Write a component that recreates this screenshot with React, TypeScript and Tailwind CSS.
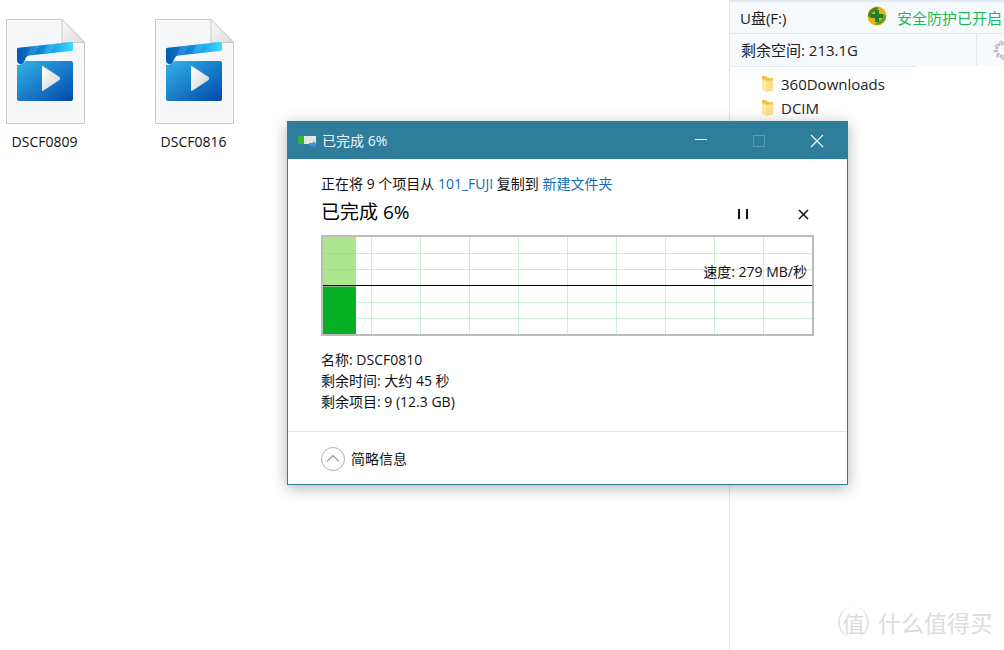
const font = { fontFamily: '"Open Sans","Noto Sans CJK SC",sans-serif' };

function VideoFile({ id }: { id: string }) {
  return (
    <svg width="80" height="107" viewBox="0 0 80 107" className="block">
      <defs>
        <linearGradient id={`${id}b`} x1="0" y1="0" x2="1" y2="1">
          <stop offset="0" stopColor="#33b4e6" />
          <stop offset="1" stopColor="#0048ad" />
        </linearGradient>
        <linearGradient id={`${id}t`} x1="0" y1="0" x2="1" y2="0">
          <stop offset="0" stopColor="#0559b0" />
          <stop offset="0.5" stopColor="#0a8fe0" />
          <stop offset="1" stopColor="#3fdcff" />
        </linearGradient>
        <linearGradient id={`${id}p`} x1="0" y1="0" x2="1" y2="1">
          <stop offset="0" stopColor="#ffffff" />
          <stop offset="1" stopColor="#d0d2d6" />
        </linearGradient>
        <linearGradient id={`${id}f`} x1="0" y1="0" x2="1" y2="1">
          <stop offset="0" stopColor="#fafafa" />
          <stop offset="1" stopColor="#dcdde0" />
        </linearGradient>
      </defs>
      <path d="M1.5 1.5H57L79.5 24V105.5H1.5Z" fill="#f6f7f9" stroke="#cacaca" />
      <path d="M57 1.5V24.5H79.5Z" fill={`url(#${id}f)`} stroke="#cacaca" />
      <path d="M12 31Q12 30 13.5 29.8L66 24Q68 23.8 68 25.5V31.5Q68 33 66 33L24 37.5Q21 38 20 42Q18.500 47 15 46Q12 45.500 12 42Z" fill={`url(#${id}t)`} />
      <path d="M27 28L35 27L30 36L22 37ZM43 26L51 25.200L46 34L38 35Z" fill="#ffffff" opacity="0.14" />
      <path d="M12 47Q18 47 20.500 43Q21.500 43 23 43H66Q68 43 68 45V81Q68 83 66 83H14Q12 83 12 81Z" fill={`url(#${id}b)`} />
      <path d="M37 49Q37 47.500 38.500 48.500L54.500 59Q56 60.500 54.500 62L38.500 72.500Q37 73.500 37 72Z" fill={`url(#${id}p)`} />
    </svg>
  );
}

function FileItem({ id, name }: { id: string; name: string }) {
  return (
    <div className="flex w-[149px] flex-col items-center">
      <VideoFile id={id} />
      <span className="mt-[7px] text-[14px] leading-[20px] text-[#111]">{name}</span>
    </div>
  );
}

function Folder() {
  return (
    <svg width="13" height="18" viewBox="0 0 13 18" className="shrink-0">
      <path d="M1 1H5L7 3H12V15H1Z" fill="#f2c14e" />
      <path d="M1 4L5 6V17L1 15Z" fill="#ffe9a6" />
      <path d="M5 5.500H12V15.500L5 17Z" fill="#fbdf8e" />
    </svg>
  );
}

function Graph() {
  const vs = [50, 99, 148, 197, 246, 295, 344, 393, 442];
  const hs = [18, 34, 67, 83];
  return (
    <svg width="493" height="101" viewBox="0 0 493 101" className="block">
      <rect x="1" y="1" width="491" height="99" fill="#fff" stroke="#bcbcbc" strokeWidth="2" />
      {vs.map((x) => (
        <rect key={x} x={x} y="2" width="1" height="97" fill="#cbeed2" />
      ))}
      {hs.map((y) => (
        <rect key={y} x="2" y={y} width="489" height="1" fill="#cbeed2" />
      ))}
      <rect x="2" y="2" width="33" height="48" fill="#aee68f" />
      <rect x="2" y="18" width="33" height="1" fill="#9ade86" />
      <rect x="2" y="34" width="33" height="1" fill="#9ade86" />
      <rect x="2" y="52" width="33" height="47" fill="#06b025" />
      <rect x="2" y="50" width="33" height="2" fill="#7fb98c" />
      <rect x="2" y="50" width="489" height="1" fill="#000" />
    </svg>
  );
}

function Dialog() {
  return (
    <div
      className="absolute left-[287px] top-[121px] h-[364px] w-[561px] border border-[#2e7d9b] bg-white shadow-[0_3px_14px_rgba(0,0,0,0.3)]"
      style={font}
    >
      <div className="flex h-[37px] items-center bg-[#2e7d9b] pl-[10px] text-white">
        <svg width="19" height="13" viewBox="0 0 19 13" className="mt-[2px]">
          <rect x="0" y="1" width="18" height="8" fill="#e4e6e6" />
          <rect x="0" y="1" width="6" height="8" fill="#35b336" />
          <path d="M11 8H15V6L19 9.500L15 13V11H11Z" fill="#3d8fe0" />
        </svg>
        <span className="ml-[5px] text-[14px] leading-[20px] text-[#eef5f8]">已完成 6%</span>
        <div className="ml-auto flex h-full items-center">
          <svg width="14" height="14" viewBox="0 0 14 14" className="mr-[44px] -translate-y-px">
            <rect x="1" y="6" width="12" height="1" fill="#fff" />
          </svg>
          <svg width="14" height="14" viewBox="0 0 14 14" className="mr-[44px]">
            <rect x="1.500" y="1.500" width="11" height="11" fill="none" stroke="#5c9ab2" />
          </svg>
          <svg width="14" height="14" viewBox="0 0 14 14" className="mr-[23px]">
            <path d="M1 1L13 13M13 1L1 13" stroke="#fff" strokeWidth="1.100" />
          </svg>
        </div>
      </div>

      <div className="px-[33px] pt-[15px]">
        <div className="text-[14px] leading-[20px] text-[#111]">
          正在将 9 个项目从 <span className="text-[#0f6cbd]">101_FUJI</span> 复制到{' '}
          <span className="text-[#0f6cbd]">新建文件夹</span>
        </div>
        <div className="mt-[3px] flex h-[30px] items-center">
          <span className="text-[19px] leading-[26px] text-black">已完成 6%</span>
          <div className="ml-auto flex items-center">
            <svg width="12" height="12" viewBox="0 0 12 12" className="mr-[49px] translate-y-[2px]">
              <rect x="1" y="1" width="2" height="10" fill="#111" />
              <rect x="9" y="1" width="2" height="10" fill="#111" />
            </svg>
            <svg width="11" height="11" viewBox="0 0 11 11" className="mr-[5px] translate-y-[2px]">
              <path d="M1 1L10 10M10 1L1 10" stroke="#111" strokeWidth="1.500" />
            </svg>
          </div>
        </div>
        <div className="relative mt-[8px] h-[101px] w-[493px]">
          <Graph />
          <span className="absolute right-[7px] top-[27px] bg-transparent text-[14px] leading-[20px] text-[#111]">
            速度: 279 MB/秒
          </span>
        </div>
        <div className="mt-[13px] text-[14px] leading-[21px] text-[#111]">
          <div>名称: DSCF0810</div>
          <div>剩余时间: 大约 45 秒</div>
          <div>剩余项目: 9 (12.3 GB)</div>
        </div>
      </div>

      <div className="mt-[19px] flex h-[55px] items-center border-t border-[#e4e4e4] px-[33px]">
        <svg width="24" height="24" viewBox="0 0 24 24">
          <circle cx="12" cy="12" r="11.500" fill="#fff" stroke="#b0b0b0" />
          <path d="M6 14.500L12 8.500L18 14.500" fill="none" stroke="#a8a8a8" strokeWidth="1.500" />
        </svg>
        <span className="ml-[6px] text-[14px] leading-[20px] text-[#111]">简略信息</span>
      </div>
    </div>
  );
}

export default function App() {
  return (
    <div className="relative flex h-[650px] w-[1004px] overflow-hidden bg-white" style={font}>
      <div className="flex w-[729px] shrink-0 items-start pl-[-30px] pt-[18px]">
        <div className="-ml-[30px] flex">
          <FileItem id="a" name="DSCF0809" />
          <FileItem id="b" name="DSCF0816" />
        </div>
      </div>

      <div className="flex-1 border-l border-[#e3e7ec]">
        <div className="border-t-2 border-[#e2ebf4] bg-[#f7fafd]">
          <div className="flex h-[32px] items-center border-b border-[#dfe8f2] pl-[10px]">
            <span className="w-[127px] text-[15px] leading-[20px] text-[#222]">U盘(F:)</span>
            <svg width="20" height="20" viewBox="0 0 20 20" className="-mt-[3px] shrink-0">
              <circle cx="10" cy="10" r="9.500" fill="#e5b414" />
              <path d="M1 10A9 9 0 0 1 12 1.500L9 5Q4 6 4 12Z" fill="#3e8a2a" />
              <path d="M19 10A9 9 0 0 1 8 18.500L11 15Q16 14 16 8Z" fill="#58a52c" />
              <path d="M8 4H12V8H16V12H12V16H8V12H4V8H8Z" fill="#1f7f2c" />
            </svg>
            <span className="ml-[10px] whitespace-nowrap text-[15px] leading-[20px] text-[#19ba5a]">
              安全防护已开启
            </span>
          </div>
          <div className="flex h-[32px] items-center overflow-hidden">
            <span className="w-[247px] shrink-0 border-r border-[#dfe8f2] pl-[11px] text-[15px] leading-[32px] text-[#222]">
              剩余空间: 213.1G
            </span>
            <svg width="20" height="20" viewBox="0 0 20 20" className="ml-[16px] shrink-0">
              <circle cx="10" cy="10" r="6.500" fill="none" stroke="#bbb" strokeWidth="3" strokeDasharray="2.500 1" />
              <circle cx="10" cy="10" r="8.500" fill="none" stroke="#c8c8c8" strokeWidth="2" strokeDasharray="3 3" />
            </svg>
          </div>
        </div>
        <div className="w-[186px] border-t border-[#e2ebf4]" />
        <div className="pl-[31px] pt-[5px]">
          <div className="flex h-[24px] items-center gap-[7px] text-[15px] text-[#222]">
            <Folder />
            <span>360Downloads</span>
          </div>
          <div className="flex h-[24px] items-center gap-[7px] text-[15px] text-[#222]">
            <Folder />
            <span>DCIM</span>
          </div>
        </div>
      </div>

      <Dialog />

      <div className="absolute left-[838px] top-[607px] flex items-center text-[#dcdcdc]">
        <div className="flex h-[31px] w-[31px] items-center justify-center rounded-full border-l-2 border-r-2 border-[#e4e4e4] text-[22px] leading-none">
          值
        </div>
        <span className="ml-[9px] text-[23px] leading-[30px] tracking-[0px]">什么值得买</span>
      </div>
    </div>
  );
}
